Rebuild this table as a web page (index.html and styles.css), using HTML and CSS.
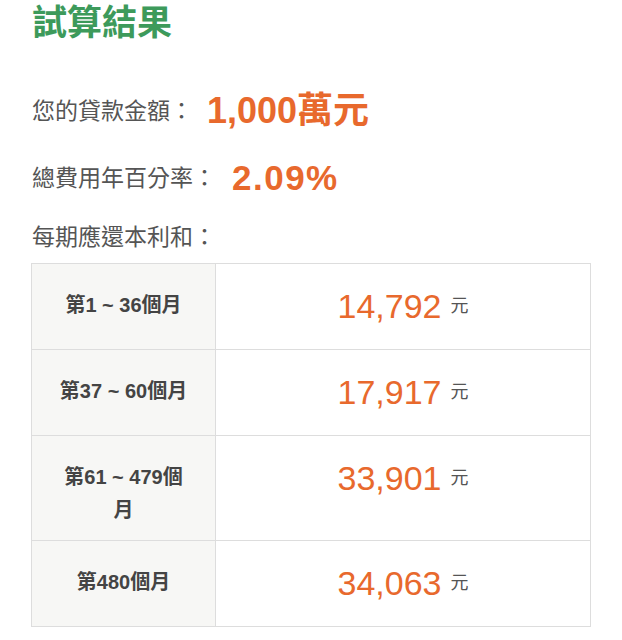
FILE: index.html
```html
<!DOCTYPE html>
<html lang="zh-Hant">
<head>
<meta charset="utf-8">
<title>試算結果</title>
<link rel="stylesheet" href="styles.css">
</head>
<body>
<main class="result">
  <h1 class="title">試算結果</h1>
  <div class="stat stat-amount">
    <span class="stat-label">您的貸款金額：</span>
    <span class="stat-value stat-value-bold">1,000萬元</span>
  </div>
  <div class="stat stat-rate">
    <span class="stat-label">總費用年百分率：</span>
    <span class="stat-value stat-value-rate">2.09%</span>
  </div>
  <div class="stat stat-sub">
    <span class="stat-label">每期應還本利和：</span>
  </div>
  <table class="pay-table">
    <tbody>
      <tr>
        <th class="period">第1 ~ 36個月</th>
        <td class="amount"><div class="amount-inner"><span class="num">14,792</span><span class="unit">元</span></div></td>
      </tr>
      <tr>
        <th class="period">第37 ~ 60個月</th>
        <td class="amount"><div class="amount-inner"><span class="num">17,917</span><span class="unit">元</span></div></td>
      </tr>
      <tr>
        <th class="period">第61 ~ 479個月</th>
        <td class="amount"><div class="amount-inner"><span class="num">33,901</span><span class="unit">元</span></div></td>
      </tr>
      <tr>
        <th class="period">第480個月</th>
        <td class="amount"><div class="amount-inner"><span class="num">34,063</span><span class="unit">元</span></div></td>
      </tr>
    </tbody>
  </table>
</main>
</body>
</html>
```

FILE: styles.css
```css
html, body {
  margin: 0;
  padding: 0;
  background: #ffffff;
}

body {
  font-family: "Liberation Sans", "Noto Sans CJK TC", sans-serif;
  color: #555555;
}

.result {
  padding: 0 31px;
}

.title {
  margin: 0;
  font-size: 35px;
  line-height: 46px;
  font-weight: 700;
  color: #3d9a5b;
  padding-left: 1px;
}

.stat {
  display: flex;
  align-items: center;
  height: 44px;
  padding-left: 1px;
}

.stat-amount {
  margin-top: 43px;
}

.stat-rate {
  margin-top: 23px;
}

.stat-sub {
  margin-top: 15px;
}

.stat-label {
  font-size: 23px;
  line-height: 30px;
  color: #555555;
  text-spacing-trim: space-all;
}

.stat-value {
  color: #e8692d;
  font-size: 36px;
  line-height: 40px;
  font-weight: 700;
}

.stat-value-bold {
  margin-left: 14px;
}

.stat-value-rate {
  font-size: 35px;
  letter-spacing: 1.5px;
  margin-left: 16px;
}

.pay-table {
  margin-top: 4px;
  width: 560px;
  border-collapse: collapse;
  border: 1px solid #dddddd;
}

.pay-table th,
.pay-table td {
  border: 1px solid #dddddd;
  vertical-align: top;
  text-align: center;
}

.period {
  width: 131px;
  padding: 25px 26px 13px;
  background: #f7f7f5;
  font-size: 20px;
  line-height: 33px;
  font-weight: 600;
  color: #444444;
}

.amount {
  padding: 20px 12px 21px;
}

.amount-inner {
  display: flex;
  justify-content: center;
  align-items: center;
  gap: 9px;
  height: 44px;
}

.num {
  font-size: 34px;
  line-height: 44px;
  color: #e8692d;
}

.unit {
  font-size: 18px;
  line-height: 1;
  color: #555555;
}
```
